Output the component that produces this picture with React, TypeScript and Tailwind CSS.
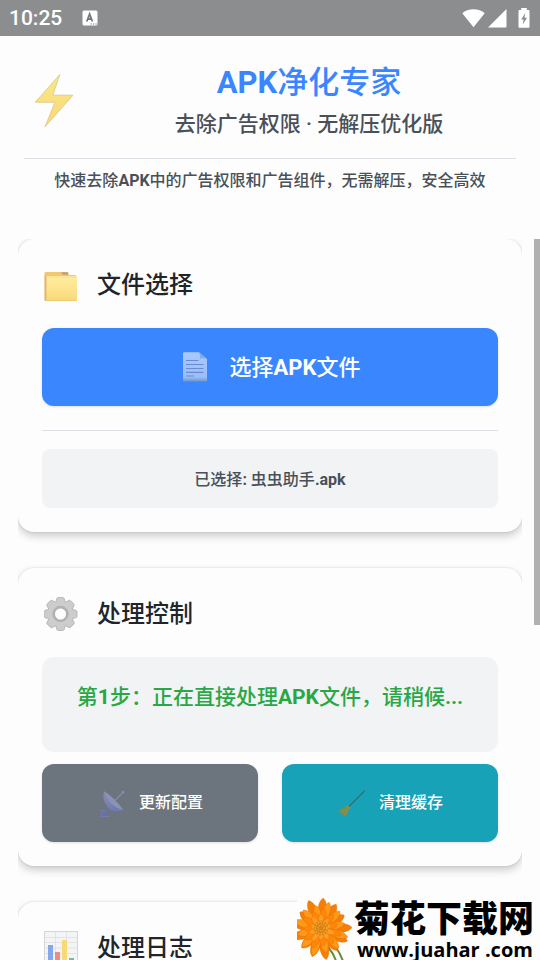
import { ReactNode } from "react";

const FONT = "font-['Roboto','Noto_Sans_CJK_SC',sans-serif]";

export default function App() {
    return (
        <div
            lang="zh-CN"
            className={`relative flex h-screen flex-col overflow-hidden bg-[#fdfdfd] font-medium text-[#212529] ${FONT}`}
        >
            <StatusBar />
            <Header />

            <main className="relative min-h-0 flex-1 overflow-hidden px-[18px]">
                <div className="flex flex-col gap-9 overflow-hidden pb-9">
                    {/* File picker */}
                    <Card icon={<FolderIcon />} title="文件选择">
                        <button
                            type="button"
                            className="flex h-[78px] w-full items-center justify-center gap-[22px] rounded-xl bg-[#3a86ff] text-[22px] text-white shadow-sm"
                        >
                            <DocumentIcon />
                            <span>
                                选择<b>APK</b>文件
                            </span>
                        </button>
                        <hr className="mt-6 mb-[18px] border-[#dee2e6]" />
                        <p className="rounded-lg bg-[#f1f3f5] pt-[19px] pb-[17px] text-center text-base leading-[23px] text-[#495057]">
                            已选择<b>:</b> 虫虫助手<b>.apk</b>
                        </p>
                    </Card>

                    {/* Controls */}
                    <Card icon={<GearIcon />} title="处理控制">
                        <p className="h-[95px] rounded-xl bg-[#f1f3f5] pt-6 text-center text-[21px] leading-8 text-[#28a745]">
                            第<b>1</b>步：正在直接处理<b>APK</b>文件，请稍候<b>...</b>
                        </p>
                        <div className="mt-3 grid grid-cols-2 gap-6">
                            <button
                                type="button"
                                className="flex h-[78px] items-center justify-center gap-[14px] rounded-xl bg-[#6c757d] text-base text-white shadow-sm"
                            >
                                <DishIcon />
                                更新配置
                            </button>
                            <button
                                type="button"
                                className="flex h-[78px] items-center justify-center gap-[14px] rounded-xl bg-[#17a2b8] text-base text-white shadow-sm"
                            >
                                <BroomIcon />
                                清理缓存
                            </button>
                        </div>
                    </Card>

                    {/* Log */}
                    <Card icon={<ChartIcon />} title="处理日志">
                        <div className="h-40 rounded-xl bg-[#f1f3f5]" />
                    </Card>
                </div>

                {/* Scroll thumb */}
                <div className="absolute top-0 right-0 h-[386px] w-1.5 bg-[#b1b1b1]" />
            </main>

            <SiteBadge />
        </div>
    );
}

function StatusBar() {
    return (
        <div className="flex h-9 shrink-0 items-center bg-[#8c8d8f] pr-2.5 pl-[9px] text-white">
            <span className="text-[21px] leading-9">10:25</span>
            <svg className="ml-5 h-4 w-4" viewBox="0 0 16 16" aria-hidden="true">
                <rect x="0.5" y="0.5" width="15" height="15" rx="1.5" fill="#fff" />
                <path d="M4.8 11.5 7.6 4 10.4 11.5M5.8 9h3.6" fill="none" stroke="#77787a" strokeWidth="1.8" />
                <path d="M8.500 14h1.200M11 14h1.200M13.500 14h1.200" stroke="#77787a" strokeWidth="1.200" />
            </svg>
            <svg className="ml-auto h-5 w-[23px]" viewBox="0 0 23 20" fill="#fff" aria-hidden="true">
                <path d="M0.3 5.2C3 2.6 7 1.2 11.5 1.2S20 2.6 22.7 5.2L11.5 19.2Z" />
            </svg>
            <svg className="ml-[3px] h-5 w-[19px]" viewBox="0 0 19 20" fill="#fff" aria-hidden="true">
                <path d="M0 19.500 18.500 1V18.500Q18.500 19.500 17.500 19.500Z" />
            </svg>
            <svg className="ml-[11px] h-5 w-3" viewBox="0 0 12 20" aria-hidden="true">
                <path
                    d="M3.2 0H8.8V2H10.5Q11.5 2 11.5 3V18.8Q11.5 19.8 10.5 19.8H1.5Q.5 19.8 .5 18.8V3Q.5 2 1.5 2H3.2Z"
                    fill="#fff"
                />
                <path d="M7.3 5 3.2 11.4H5.6L4.8 16.6 9 9.8H6.5Z" fill="#8c8d8f" />
            </svg>
        </div>
    );
}

function Header() {
    return (
        <header className="h-[203px] shrink-0 px-6 pt-[25px]">
            <div className="flex h-[98px] items-start border-b border-[#dee2e6]">
                <BoltIcon />
                <div className="flex-1 pl-[26px] text-center">
                    <h1 className="text-[31px] leading-[44px] text-[#3a86ff]">
                        <b>APK</b>净化专家
                    </h1>
                    <p className="text-[21px] leading-[38px] text-[#495057]">去除广告权限 · 无解压优化版</p>
                </div>
            </div>
            <p className="mt-2 text-center text-base leading-7 text-[#495057]">
                快速去除<b>APK</b>中的广告权限和广告组件，无需解压，安全高效
            </p>
        </header>
    );
}

function Card({ icon, title, children }: { icon: ReactNode; title: string; children: ReactNode }) {
    return (
        <section className="rounded-2xl bg-[#fdfdfd] p-6 shadow-[0_4px_8px_rgba(0,0,0,0.2),0_0_2px_rgba(0,0,0,0.15)]">
            <div className="mb-[22px] flex h-[43px] items-center gap-[17px]">
                {icon}
                <h2 className="text-2xl">{title}</h2>
            </div>
            {children}
        </section>
    );
}

/* Watermark of the download site, floats over the page */
function SiteBadge() {
    return (
        <a
            href="#"
            className="absolute right-0 bottom-0 flex h-[63px] w-[243px] bg-[#fdfdfd] text-black"
        >
            <FlowerIcon />
            <span className="flex flex-1 flex-col">
                <span className="h-[42px] text-[36px] leading-[46px] font-black whitespace-nowrap">菊花下载网</span>
                <span className="pl-[3px] font-['Open_Sans',sans-serif] text-[20px] leading-[21px] font-bold whitespace-nowrap">
                    www.juahar .com
                </span>
            </span>
        </a>
    );
}

function BoltIcon() {
    return (
        <svg className="mt-[11px] ml-2 h-[56px] w-[44px]" viewBox="0 0 44 56" aria-hidden="true">
            <defs>
                <linearGradient id="bolt" x1="0" y1="0" x2="0" y2="1">
                    <stop offset="0" stopColor="#f3ea86" />
                    <stop offset="0.5" stopColor="#fbdf7f" />
                    <stop offset="1" stopColor="#f7d877" />
                </linearGradient>
            </defs>
            <path
                d="M27.8 2.5 3.3 30.2H23L13 54.8 41 23.2H20.8Z"
                fill="url(#bolt)"
                stroke="#dccb8c"
                strokeWidth="0.9"
                strokeLinejoin="round"
            />
        </svg>
    );
}

function FolderIcon() {
    return (
        <svg className="ml-0.5 h-9 w-9" viewBox="0 0 36 36" aria-hidden="true">
            <defs>
                <linearGradient id="folder" x1="0" y1="0" x2="0" y2="1">
                    <stop offset="0" stopColor="#ffeca0" />
                    <stop offset="0.6" stopColor="#fde28a" />
                    <stop offset="1" stopColor="#f6d878" />
                </linearGradient>
            </defs>
            <path d="M.5 6Q.5 5 1.5 5H23Q24.5 5 24.5 6.5V8H31Q32 8 32 9V34H2Q.5 34 .5 32.5Z" fill="#f3c771" />
            <path d="M17 5.300H23.500Q24.500 5.300 24.500 7.800H18.500Z" fill="#b9a27c" />
            <path d="M.6 8V32.500Q.7 34 3 34V10Z" fill="#dcb87c" />
            <rect x="2.500" y="9" width="30.500" height="25" rx="1" fill="url(#folder)" />
            <path d="M3 10H32.500" stroke="#fadd85" />
            <path d="M3 33.500H32.500" stroke="#eec971" />
        </svg>
    );
}

function DocumentIcon() {
    return (
        <svg className="h-8 w-7" viewBox="0 0 28 32" aria-hidden="true">
            <defs>
                <linearGradient id="doc" x1="0" y1="0" x2="0" y2="1">
                    <stop offset="0" stopColor="#a9c9fc" />
                    <stop offset="0.85" stopColor="#9abefa" />
                    <stop offset="1" stopColor="#7394c4" />
                </linearGradient>
            </defs>
            <path d="M3 2Q3 1.300 4 1.300H19L27 8V29.500Q27 30.500 26 30.500H4Q3 30.500 3 29.500Z" fill="url(#doc)" />
            <path d="M19 1.300 27 8Q23 6.500 20 7.500Q21 4 19 1.300Z" fill="#86a8df" />
            <path
                d="M6 9.500H18.500M6 13.500H23.500M6 17.500H23.500M6 21.300H23.500M6 25H14"
                stroke="#6b8acf"
                strokeWidth="1.200"
            />
        </svg>
    );
}

function GearIcon() {
    const teeth = [0, 45, 90, 135, 180, 225, 270, 315];
    return (
        <svg className="ml-0.5 h-9 w-9" viewBox="0 0 36 36" aria-hidden="true">
            <defs>
                <mask id="gearHole">
                    <rect width="36" height="36" fill="#fff" />
                    <circle cx="16.500" cy="18" r="5.500" fill="#000" />
                </mask>
            </defs>
            <g mask="url(#gearHole)">
                {teeth.map((angle) => (
                    <path
                        key={angle}
                        d="M11.500 7 13 2.200Q13.300 1.500 14.300 1.500H18.700Q19.700 1.500 20 2.200L21.500 7Z"
                        transform={`rotate(${angle} 16.500 18)`}
                        fill="#cccccc"
                        stroke="#b4b4b4"
                        strokeWidth="0.9"
                    />
                ))}
                <circle cx="16.500" cy="18" r="12.500" fill="#cdcdcd" />
                <circle cx="16.500" cy="18" r="6.800" fill="none" stroke="#b2b2b2" strokeWidth="2.800" />
            </g>
        </svg>
    );
}

function DishIcon() {
    return (
        <svg className="h-7 w-7" viewBox="0 0 28 28" aria-hidden="true">
            <defs>
                <linearGradient id="dish" x1="0" y1="0" x2="0.6" y2="1">
                    <stop offset="0" stopColor="#858eac" />
                    <stop offset="1" stopColor="#6f79b4" />
                </linearGradient>
            </defs>
            <path d="M5.500 20.500 8.500 19.500 13 28H3.500Z" fill="#6871a4" />
            <path d="M2.500 21.500H8M2.500 27.500H13M4 27 6 21" stroke="#737ca8" strokeWidth="1" />
            <path d="M7 2.200C5.500 8 7 14 11 18.200S20 23.500 26 21Z" fill="url(#dish)" />
            <path d="M7 2.200C13 5.500 22 14 26 21C17 19 9 11 7 2.200Z" fill="#8a93b5" />
            <path d="M17 12.500 26 3.300" stroke="#8790a6" strokeWidth="1.100" />
            <circle cx="26" cy="3.200" r="1.400" fill="#858ea6" />
        </svg>
    );
}

function BroomIcon() {
    return (
        <svg className="h-7 w-7" viewBox="0 0 28 28" aria-hidden="true">
            <path d="M12 17.500 27.500 2" stroke="#37706e" strokeWidth="1.200" strokeLinecap="round" />
            <path d="M10.800 16.500 13 18.700 9 27.500Q6.500 27.500 5.500 25.500Q3 25 1.500 21.500Z" fill="#7b8c50" />
            <path d="M10.500 18.500 4.500 23.500M11.500 19.500 7.500 26" stroke="#9b9348" strokeWidth="0.900" />
            <path d="M9.800 16.500 13 19.500" stroke="#9c8843" strokeWidth="1.300" />
        </svg>
    );
}

function ChartIcon() {
    return (
        <svg className="ml-0.5 h-9 w-9" viewBox="0 0 36 36" aria-hidden="true">
            <rect x="0.500" y="1.500" width="33" height="33" fill="#f3f4f5" stroke="#d5d6d8" />
            <path d="M11.500 2V34M22.500 2V34M1 7.500H33M1 12.500H33M1 18H33M1 23.500H33" stroke="#dddfe1" strokeWidth="0.800" />
            <rect x="4" y="15" width="5" height="19" fill="#84a8ee" />
            <rect x="11" y="22" width="5" height="12" fill="#ef8c82" />
            <rect x="18" y="10" width="5" height="24" fill="#f8da74" />
            <rect x="25" y="28" width="5" height="6" fill="#74bf91" />
        </svg>
    );
}

function FlowerIcon() {
    const rings = [
        { count: 13, length: 31, width: 6, fill: "#f57f06", start: 4 },
        { count: 12, length: 28, width: 5, fill: "#fe9a17", start: 17 },
        { count: 11, length: 21, width: 4.5, fill: "#ff860a", start: 8 },
        { count: 10, length: 15, width: 3.5, fill: "#ff9d22", start: 0 },
    ];
    return (
        <svg className="h-[63px] w-[57px] shrink-0" viewBox="0 0 57 63" aria-hidden="true">
            <path d="M31 50Q37 57 39 64M38 49Q43 56 46 64" stroke="#6a8a35" strokeWidth="2" fill="none" />
            {rings.map((ring) =>
                Array.from({ length: ring.count }, (_, i) => {
                    const reach = ring.length - (i % 3) * 2;
                    return (
                        <path
                            key={`${ring.length}-${i}`}
                            d={`M0 0C${ring.width} ${-reach * 0.4} ${ring.width} ${-reach * 0.85} 0 ${-reach}C${-ring.width} ${-reach * 0.85} ${-ring.width} ${-reach * 0.4} 0 0Z`}
                            transform={`translate(24 32) rotate(${ring.start + (i * 360) / ring.count})`}
                            fill={ring.fill}
                            stroke="#e87005"
                            strokeWidth="0.4"
                        />
                    );
                }),
            )}
            <circle cx="24" cy="31" r="7.500" fill="#d98213" />
            <circle cx="24" cy="31" r="6" fill="none" stroke="#f1a72c" strokeWidth="1.800" strokeDasharray="1.500 1.200" />
            <circle cx="24" cy="31" r="3" fill="none" stroke="#eda12c" strokeWidth="1.600" strokeDasharray="1.200 1" />
        </svg>
    );
}
